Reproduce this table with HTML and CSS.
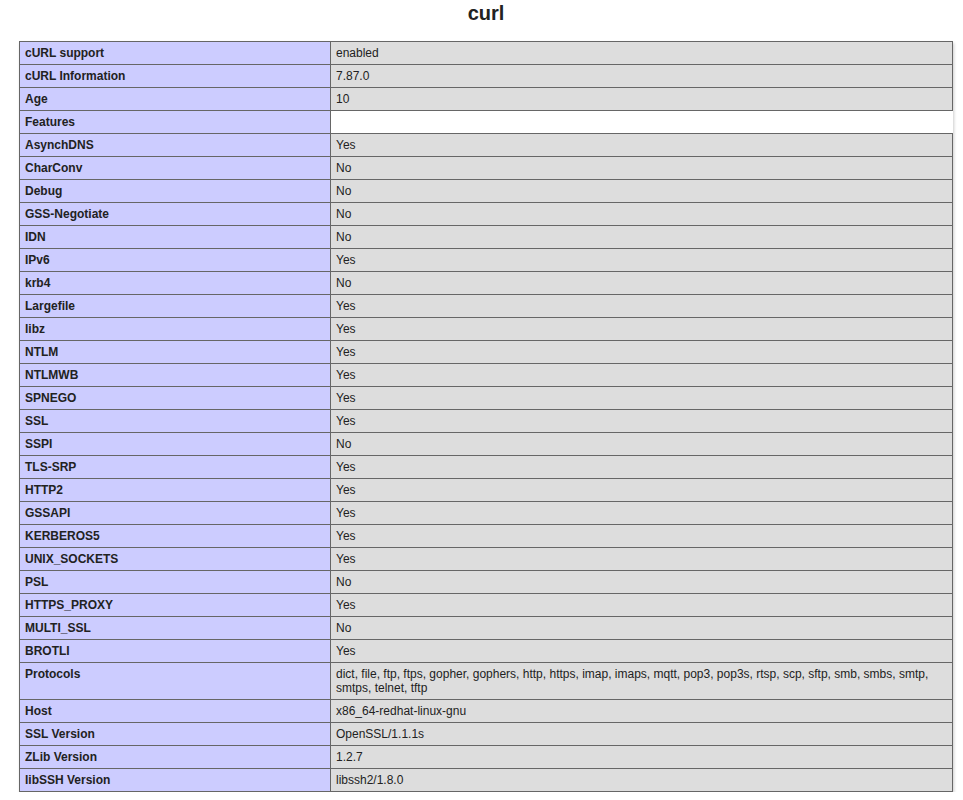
FILE: index.html
```html
<!DOCTYPE html>
<html>
<head>
<meta charset="utf-8">
<title>curl</title>
<link rel="stylesheet" href="styles.css">
</head>
<body>
<div class="center">
<h2 class="title">curl</h2>
<table class="info">
<tr><td class="e">cURL support</td><td class="v">enabled</td></tr>
<tr><td class="e">cURL Information</td><td class="v">7.87.0</td></tr>
<tr><td class="e">Age</td><td class="v">10</td></tr>
<tr><td class="e">Features</td><td class="blank"></td></tr>
<tr><td class="e">AsynchDNS</td><td class="v">Yes</td></tr>
<tr><td class="e">CharConv</td><td class="v">No</td></tr>
<tr><td class="e">Debug</td><td class="v">No</td></tr>
<tr><td class="e">GSS-Negotiate</td><td class="v">No</td></tr>
<tr><td class="e">IDN</td><td class="v">No</td></tr>
<tr><td class="e">IPv6</td><td class="v">Yes</td></tr>
<tr><td class="e">krb4</td><td class="v">No</td></tr>
<tr><td class="e">Largefile</td><td class="v">Yes</td></tr>
<tr><td class="e">libz</td><td class="v">Yes</td></tr>
<tr><td class="e">NTLM</td><td class="v">Yes</td></tr>
<tr><td class="e">NTLMWB</td><td class="v">Yes</td></tr>
<tr><td class="e">SPNEGO</td><td class="v">Yes</td></tr>
<tr><td class="e">SSL</td><td class="v">Yes</td></tr>
<tr><td class="e">SSPI</td><td class="v">No</td></tr>
<tr><td class="e">TLS-SRP</td><td class="v">Yes</td></tr>
<tr><td class="e">HTTP2</td><td class="v">Yes</td></tr>
<tr><td class="e">GSSAPI</td><td class="v">Yes</td></tr>
<tr><td class="e">KERBEROS5</td><td class="v">Yes</td></tr>
<tr><td class="e">UNIX_SOCKETS</td><td class="v">Yes</td></tr>
<tr><td class="e">PSL</td><td class="v">No</td></tr>
<tr><td class="e">HTTPS_PROXY</td><td class="v">Yes</td></tr>
<tr><td class="e">MULTI_SSL</td><td class="v">No</td></tr>
<tr><td class="e">BROTLI</td><td class="v">Yes</td></tr>
<tr><td class="e">Protocols</td><td class="v">dict, file, ftp, ftps, gopher, gophers, http, https, imap, imaps, mqtt, pop3, pop3s, rtsp, scp, sftp, smb, smbs, smtp, smtps, telnet, tftp</td></tr>
<tr><td class="e">Host</td><td class="v">x86_64-redhat-linux-gnu</td></tr>
<tr><td class="e">SSL Version</td><td class="v">OpenSSL/1.1.1s</td></tr>
<tr><td class="e">ZLib Version</td><td class="v">1.2.7</td></tr>
<tr><td class="e">libSSH Version</td><td class="v">libssh2/1.8.0</td></tr>
</table>
</div>
</body>
</html>
```
FILE: styles.css
```css
html, body {
  margin: 0;
  padding: 0;
  background: #fff;
}
body {
  color: #222;
  font-family: "Liberation Sans", Arial, sans-serif;
}
.center {
  width: 934px;
  margin-left: 19px;
}
.title {
  margin: 0;
  padding-top: 2px;
  height: 39px;
  line-height: 23px;
  font-size: 20px;
  font-weight: bold;
  text-align: center;
}
.info {
  border-collapse: collapse;
  border: 0;
  width: 934px;
  box-shadow: 1px 2px 3px #ccc;
  text-align: left;
}
.info td {
  border: 1px solid #666;
  font-size: 12px;
  vertical-align: baseline;
  padding: 4px 5px;
}
.e {
  background-color: #ccf;
  width: 300px;
  font-weight: bold;
}
.v {
  background-color: #ddd;
  word-wrap: break-word;
}
.blank {
  background-color: #fff;
  border-right-color: #fff !important;
}
```
